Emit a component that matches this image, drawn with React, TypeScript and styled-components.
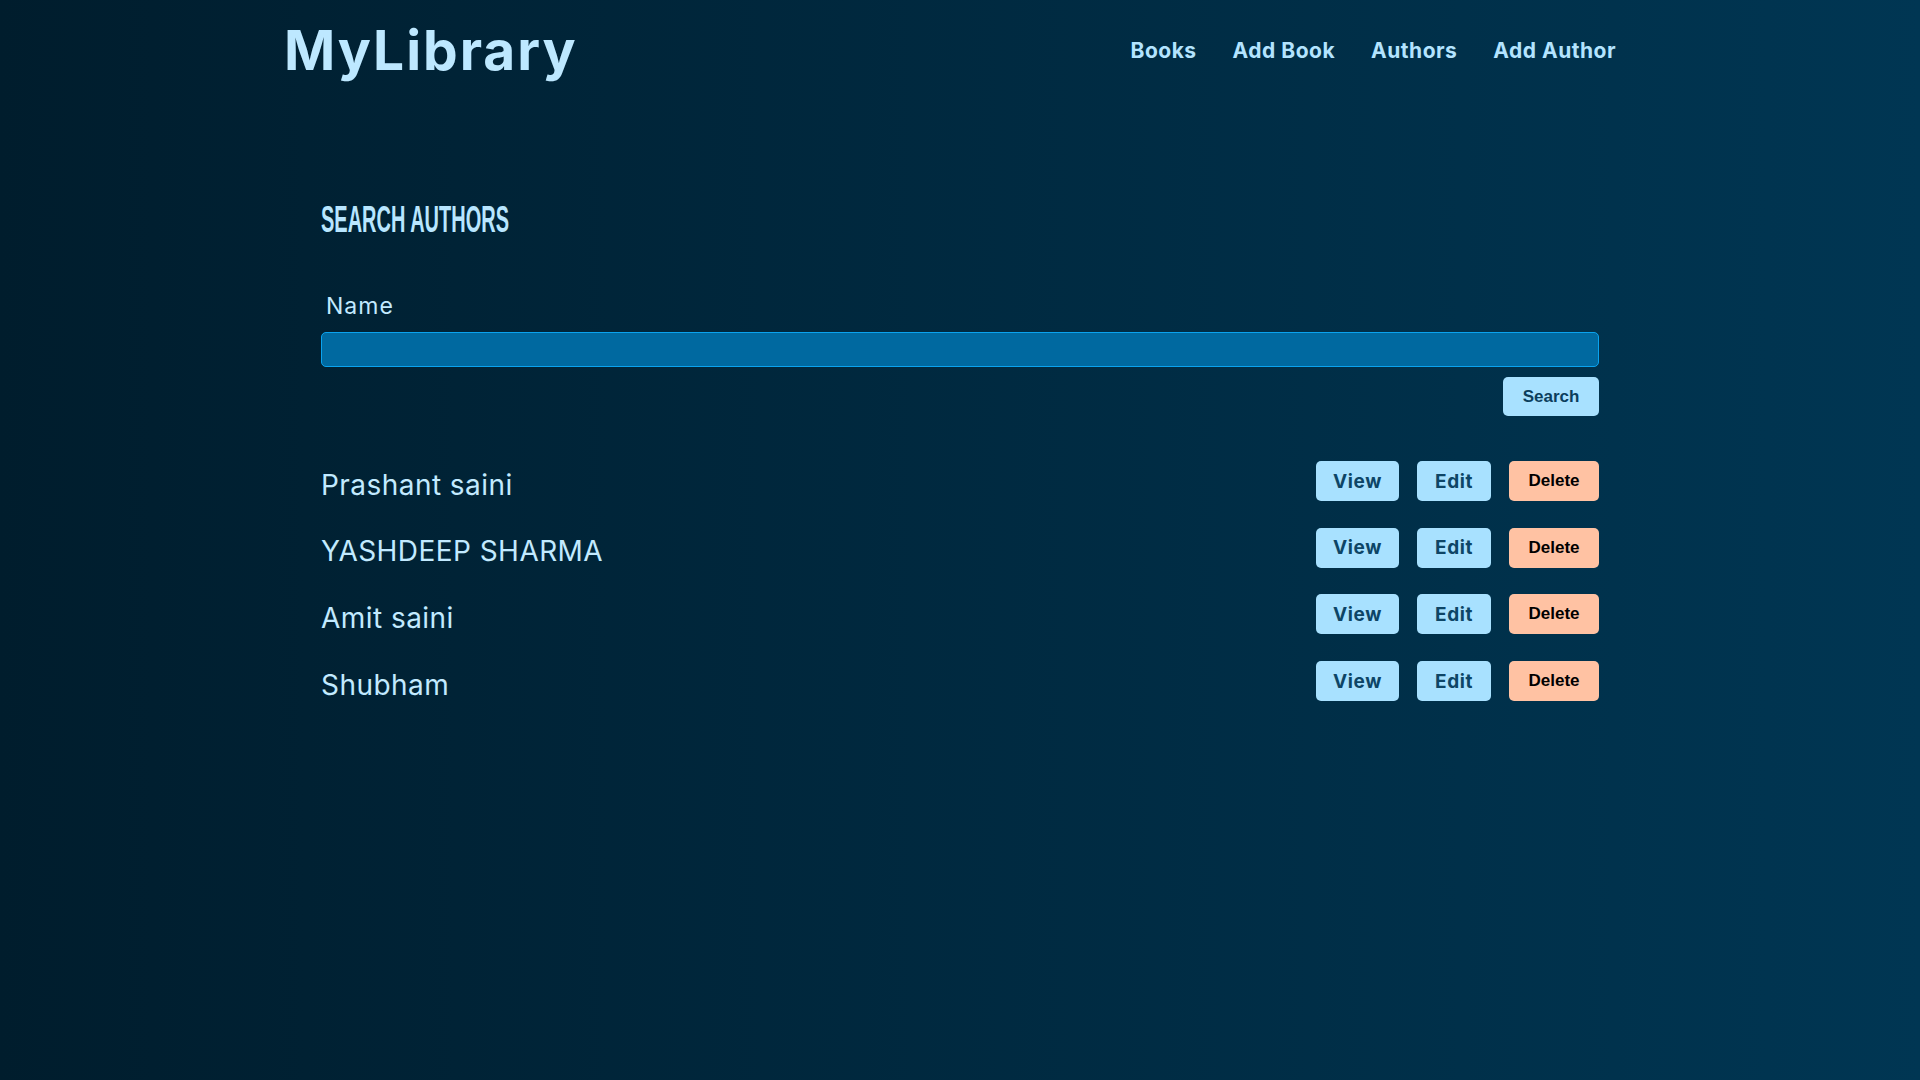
import React from "react";
import styled, { createGlobalStyle } from "styled-components";

const GlobalStyle = createGlobalStyle`
  html, body { margin: 0; padding: 0; }
  body {
    font-family: Inter, "Noto Sans", sans-serif;
    background: linear-gradient(to right, #001d2d, #003653);
    min-height: 100vh;
  }
  * { box-sizing: border-box; }
`;

const Page = styled.div`
  min-height: 100vh;
  background: linear-gradient(to right, #001d2d, #003653);
`;

const Container = styled.div`
  width: 1350px;
  margin: 0 auto;
`;

const Header = styled.header`
  height: 100px;
  display: flex;
  align-items: center;
  justify-content: space-between;
  padding-right: 19px;
`;

const Logo = styled.a`
  font-family: Inter, sans-serif;
  font-weight: 700;
  font-size: 55px;
  letter-spacing: 2px;
  color: #bde8ff;
  text-decoration: none;
  margin-left: -1px;
  line-height: 1;
`;

const Nav = styled.nav`
  display: flex;
  gap: 36px;
`;

const NavLink = styled.a`
  font-family: Inter, sans-serif;
  font-weight: 700;
  font-size: 21px;
  letter-spacing: 0.5px;
  color: #b3e4ff;
  text-decoration: none;
`;

const Main = styled.main`
  padding: 102px 36px 0 36px;
`;

const Title = styled.h2`
  margin: 0;
  font-family: "Liberation Sans", Arial, sans-serif;
  font-weight: 700;
  font-size: 36px;
  line-height: 36px;
  color: #b8e6ff;
  display: inline-block;
  transform: scaleX(0.555);
  transform-origin: left center;
  white-space: nowrap;
`;

const Form = styled.form`
  display: flex;
  flex-direction: column;
  margin-top: 57px;
`;

const Label = styled.label`
  font-family: Inter, sans-serif;
  font-size: 23px;
  line-height: 22px;
  letter-spacing: 1px;
  color: #c2eaff;
  padding-left: 5px;
`;

const Input = styled.input`
  margin-top: 15px;
  height: 35px;
  width: 100%;
  background: #0069a0;
  border: 1px solid #0aa3ef;
  border-radius: 5px;
  outline: none;
  color: #e0f4ff;
  font-size: 18px;
  padding: 0 8px;
`;

const FormActions = styled.div`
  display: flex;
  justify-content: flex-end;
  margin-top: 10px;
`;

const SearchButton = styled.button`
  width: 96px;
  height: 39px;
  border: none;
  border-radius: 5px;
  background: #a8e1ff;
  color: #0b3d5c;
  font-family: "Liberation Sans", Arial, sans-serif;
  font-weight: 700;
  font-size: 17px;
  cursor: pointer;
`;

const List = styled.div`
  display: flex;
  flex-direction: column;
  gap: 26.7px;
  margin-top: 45px;
`;

const Row = styled.div`
  display: flex;
  align-items: center;
  justify-content: space-between;
  height: 40px;
`;

const AuthorName = styled.div`
  font-family: Inter, sans-serif;
  font-size: 28px;
  letter-spacing: 0.45px;
  color: #c2eaff;
  padding-top: 7px;
`;

const Actions = styled.div`
  display: flex;
  gap: 18px;
`;

const ActionButton = styled.button<{ $w: number; $danger?: boolean }>`
  width: ${(p) => p.$w}px;
  height: 40px;
  border: none;
  border-radius: 5px;
  cursor: pointer;
  background: ${(p) => (p.$danger ? "#ffc2a3" : "#a8e1ff")};
  color: ${(p) => (p.$danger ? "#000000" : "#0d4566")};
  font-family: ${(p) =>
    p.$danger ? `"Liberation Sans", Arial, sans-serif` : `Inter, sans-serif`};
  font-weight: 700;
  font-size: ${(p) => (p.$danger ? "17px" : "19px")};
  letter-spacing: ${(p) => (p.$danger ? "0" : "0.6px")};
`;

const authors = ["Prashant saini", "YASHDEEP SHARMA", "Amit saini", "Shubham"];

export default function App() {
  return (
    <>
      <GlobalStyle />
      <Page>
        <Container>
          <Header>
            <Logo href="#">MyLibrary</Logo>
            <Nav>
              <NavLink href="#">Books</NavLink>
              <NavLink href="#">Add Book</NavLink>
              <NavLink href="#">Authors</NavLink>
              <NavLink href="#">Add Author</NavLink>
            </Nav>
          </Header>
          <Main>
            <Title>SEARCH AUTHORS</Title>
            <Form onSubmit={(e) => e.preventDefault()}>
              <Label htmlFor="name">Name</Label>
              <Input id="name" type="text" />
              <FormActions>
                <SearchButton type="submit">Search</SearchButton>
              </FormActions>
            </Form>
            <List>
              {authors.map((a) => (
                <Row key={a}>
                  <AuthorName>{a}</AuthorName>
                  <Actions>
                    <ActionButton $w={83}>View</ActionButton>
                    <ActionButton $w={74}>Edit</ActionButton>
                    <ActionButton $w={90} $danger>
                      Delete
                    </ActionButton>
                  </Actions>
                </Row>
              ))}
            </List>
          </Main>
        </Container>
      </Page>
    </>
  );
}
